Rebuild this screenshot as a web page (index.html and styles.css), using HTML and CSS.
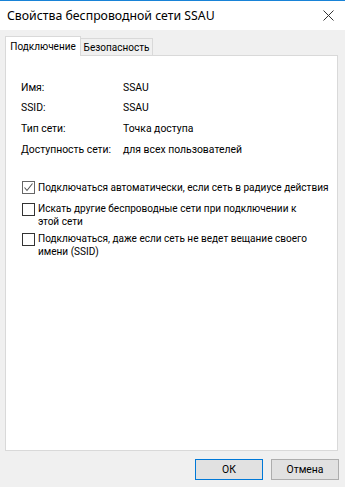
FILE: index.html
```html
<!DOCTYPE html>
<html lang="ru">
<head>
<meta charset="utf-8">
<title>Свойства беспроводной сети SSAU</title>
<link rel="stylesheet" href="styles.css">
</head>
<body>
<div class="window">
  <div class="titlebar">
    <span class="title">Свойства беспроводной сети SSAU</span>
    <svg class="close" width="11" height="11" viewBox="0 0 11 11"><path d="M0.5 0.5 L10.5 10.5 M10.5 0.5 L0.5 10.5" stroke="#333" stroke-width="1" fill="none"/></svg>
  </div>
  <div class="body">
    <div class="tabs">
      <div class="tab active">Подключение</div>
      <div class="tab">Безопасность</div>
    </div>
    <div class="panel">
      <div class="info">
        <div class="label">Имя:</div><div class="value">SSAU</div>
        <div class="label">SSID:</div><div class="value">SSAU</div>
        <div class="label">Тип сети:</div><div class="value">Точка доступа</div>
        <div class="label">Доступность сети:</div><div class="value">для всех пользователей</div>
      </div>
      <div class="checks">
        <div class="check c1">
          <span class="box checked"><svg width="11" height="11" viewBox="0 0 11 11"><path d="M1.5 5.5 L4 8.5 L9.5 1.5" stroke="#555" stroke-width="1.1" fill="none"/></svg></span>
          <span class="ctext">Подключаться автоматически, если сеть в радиусе действия</span>
        </div>
        <div class="check c2">
          <span class="box"></span>
          <span class="ctext">Искать другие беспроводные сети при подключении к<br>этой сети</span>
        </div>
        <div class="check c3">
          <span class="box"></span>
          <span class="ctext">Подключаться, даже если сеть не ведет вещание своего<br>имени (SSID)</span>
        </div>
      </div>
    </div>
    <div class="footer">
      <button class="btn default">ОК</button>
      <button class="btn">Отмена</button>
    </div>
  </div>
</div>
</body>
</html>
```

FILE: styles.css
```css
* { box-sizing: border-box; }
html, body { margin: 0; padding: 0; }
body {
  width: 345px;
  height: 487px;
  overflow: hidden;
  font-family: Roboto, "Noto Sans", sans-serif;
  font-size: 10.4px;
  color: #000;
  background: #f0f0f0;
}
.window {
  width: 345px;
  height: 487px;
  display: flex;
  flex-direction: column;
}
.titlebar {
  height: 30px;
  background: #fff;
  border-top: 1px solid #1883d7;
  display: flex;
  align-items: center;
  padding-left: 7px;
  padding-right: 11px;
  padding-bottom: 1px;
}
.title {
  flex: 1;
  font-family: "Noto Sans", Roboto, sans-serif;
  font-size: 12.3px;
  color: #000;
}
.close { display: block; }
.body {
  flex: 1;
  display: flex;
  flex-direction: column;
  padding: 6px 7px 0 5px;
}
.tabs {
  display: flex;
  align-items: flex-end;
  height: 19px;
  position: relative;
  z-index: 1;
}
.tab {
  height: 17px;
  width: 72px;
  border: 1px solid #d9d9d9;
  border-bottom: none;
  border-left: none;
  background: #f0f0f0;
  display: flex;
  align-items: center;
  justify-content: center;
  color: #000;
  white-space: nowrap;
  font-size: 10px;
}
.tab.active {
  width: 76px;
  height: 20px;
  margin-bottom: -1px;
  background: #fff;
  border-left: 1px solid #d9d9d9;
  padding-bottom: 1px;
}
.panel {
  height: 396px;
  background: #fff;
  border: 1px solid #d9d9d9;
  padding: 21px 15px 0 15px;
}
.info {
  display: grid;
  grid-template-columns: 102px 1fr;
  grid-auto-rows: 20.67px;
  align-items: center;
  line-height: 13px;
}
.checks {
  margin-top: 21px;
  line-height: 13px;
  font-size: 10.05px;
}
.check {
  display: flex;
  align-items: flex-start;
}
.c2 { margin-top: 8px; }
.c3 { margin-top: 4px; }
.box {
  flex: none;
  width: 13px;
  height: 13px;
  margin: 0.5px 3px 0 1px;
  border: 1px solid #333;
  background: #fff;
  display: flex;
  align-items: center;
  justify-content: center;
}
.box.checked { border-color: #666; }
.box svg { display: block; }
.ctext { white-space: nowrap; }
.footer {
  display: flex;
  justify-content: flex-end;
  gap: 8px;
  padding-top: 8px;
}
.btn {
  width: 68px;
  height: 21px;
  margin: 0;
  padding: 0;
  font-family: inherit;
  font-size: 10.4px;
  color: #000;
  background: #e1e1e1;
  border: 1px solid #adadad;
}
.btn.default { border-color: #0078d7; }
.footer .btn:last-child { margin-right: -1px; }
```
